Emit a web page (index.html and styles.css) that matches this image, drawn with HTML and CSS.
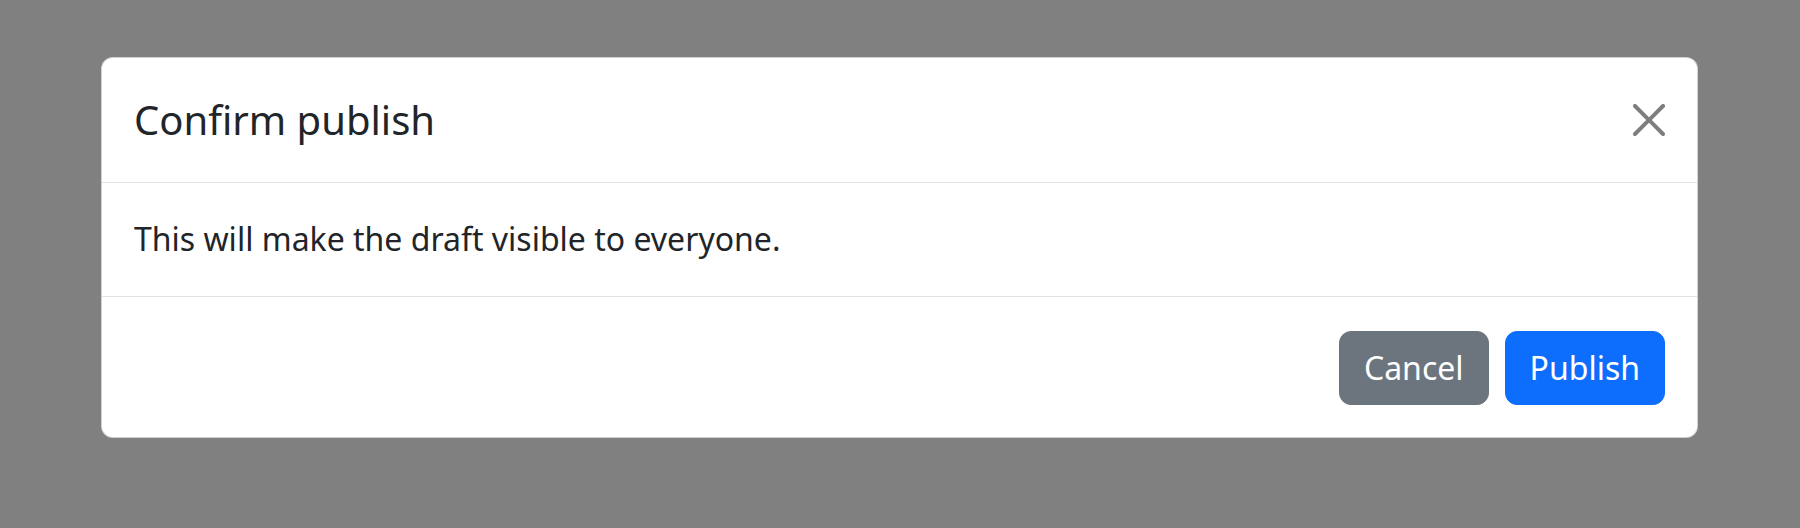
FILE: index.html
```html
<!DOCTYPE html>
<html lang="en">
<head>
<meta charset="utf-8">
<title>Confirm publish</title>
<link rel="stylesheet" href="styles.css">
</head>
<body>
<div class="backdrop">
  <div class="modal" role="dialog" aria-labelledby="modal-title">
    <div class="modal-header">
      <h5 class="modal-title" id="modal-title">Confirm publish</h5>
      <button type="button" class="btn-close" aria-label="Close">
        <svg viewBox="0 0 16 16" width="32" height="32" aria-hidden="true"><path d="M.293.293a1 1 0 0 1 1.414 0L8 6.586 14.293.293a1 1 0 1 1 1.414 1.414L9.414 8l6.293 6.293a1 1 0 0 1-1.414 1.414L8 9.414l-6.293 6.293a1 1 0 0 1-1.414-1.414L6.586 8 .293 1.707a1 1 0 0 1 0-1.414z"/></svg>
      </button>
    </div>
    <div class="modal-body">
      <p class="modal-text">This will make the draft visible to everyone.</p>
    </div>
    <div class="modal-footer">
      <button type="button" class="btn btn-secondary">Cancel</button>
      <button type="button" class="btn btn-primary">Publish</button>
    </div>
  </div>
</div>
</body>
</html>
```

FILE: styles.css
```css
html, body {
  margin: 0;
  padding: 0;
}
body {
  background: #808080;
  font-family: "Noto Sans", "Open Sans", "Liberation Sans", sans-serif;
  font-size: 32px;
  line-height: 1.5;
  color: #212529;
  width: 1800px;
  height: 528px;
  overflow: hidden;
}
.backdrop {
  padding: 57px 102px 0 101px;
}
.modal {
  background: #fff;
  border: 1px solid rgba(0, 0, 0, 0.175);
  border-radius: 12px;
  display: flex;
  flex-direction: column;
}
.modal-header {
  display: flex;
  align-items: center;
  padding: 32px;
  border-bottom: 1px solid #dee2e6;
}
.modal-title {
  margin: 0;
  font-size: 40px;
  line-height: 60px;
  font-weight: 400;
  color: #212529;
}
.btn-close {
  margin: -8px -8px -8px auto;
  padding: 8px;
  width: 48px;
  height: 48px;
  box-sizing: border-box;
  border: 0;
  background: transparent;
  display: flex;
  align-items: center;
  justify-content: center;
  cursor: pointer;
}
.btn-close svg {
  display: block;
  fill: #000;
  opacity: 0.5;
}
.modal-body {
  padding: 32px 32px 33px;
}
.modal-text {
  margin: 0;
}
.modal-footer {
  display: flex;
  justify-content: flex-end;
  align-items: center;
  padding: 26px 24px 24px;
  border-top: 1px solid #dee2e6;
}
.btn {
  margin: 8px;
  padding: 12px 24px;
  font-family: inherit;
  font-size: 32px;
  line-height: 48px;
  border: 1px solid transparent;
  border-radius: 12px;
  color: #fff;
  cursor: pointer;
}
.btn-secondary {
  background: #6c757d;
  border-color: #6c757d;
}
.btn-primary {
  background: #0d6efd;
  border-color: #0d6efd;
}
```
